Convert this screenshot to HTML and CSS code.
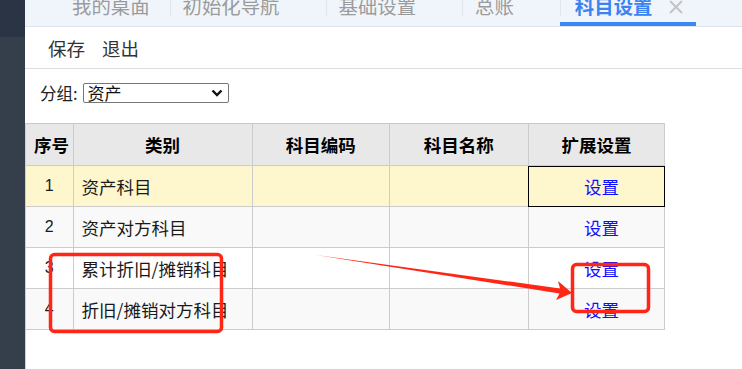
FILE: index.html
```html
<!DOCTYPE html>
<html lang="zh-CN">
<head>
    <meta charset="UTF-8">
    <meta name="viewport" content="width=device-width, initial-scale=1.0">
    <title>科目设置</title>
    <link rel="stylesheet" href="styles.css">
</head>
<body>
    <div class="sidebar">
        <div class="sidebar-top"></div>
    </div>

    <div class="main">
        <div class="tabbar">
            <div class="tab tab-first"><span class="tab-label">我的桌面</span></div>
            <div class="tab"><span class="tab-label">初始化导航</span></div>
            <div class="tab"><span class="tab-label">基础设置</span></div>
            <div class="tab"><span class="tab-label">总账</span></div>
            <div class="tab tab-active">
                <span class="tab-label">科目设置</span>
                <svg class="tab-close" width="14" height="14" viewBox="0 0 14 14">
                    <path d="M1 1 L13 13 M13 1 L1 13" stroke="#c4c4c4" stroke-width="2" fill="none"/>
                </svg>
            </div>
        </div>

        <div class="toolbar">
            <a class="tool-btn">保存</a>
            <a class="tool-btn">退出</a>
        </div>

        <div class="filter">
            <label for="group">分组:</label>
            <span class="select-box">
                <select id="group">
                    <option>资产</option>
                    <option>负债</option>
                    <option>权益</option>
                </select>
                <svg class="select-arrow" width="12" height="8" viewBox="0 0 12 8">
                    <path d="M1.5 1.5 L6 6 L10.5 1.5" stroke="#111" stroke-width="2.4" fill="none"/>
                </svg>
            </span>
        </div>

        <div class="grid-wrap">
            <table class="grid">
                <colgroup>
                    <col style="width:47px">
                    <col style="width:179px">
                    <col style="width:137px">
                    <col style="width:139px">
                    <col style="width:136px">
                </colgroup>
                <thead>
                    <tr>
                        <th>序号</th>
                        <th>类别</th>
                        <th>科目编码</th>
                        <th>科目名称</th>
                        <th>扩展设置</th>
                    </tr>
                </thead>
                <tbody>
                    <tr class="row-selected">
                        <td class="num">1</td>
                        <td>资产科目</td>
                        <td></td>
                        <td></td>
                        <td class="link cell-active"><a>设置</a></td>
                    </tr>
                    <tr class="row-alt">
                        <td class="num">2</td>
                        <td>资产对方科目</td>
                        <td></td>
                        <td></td>
                        <td class="link"><a>设置</a></td>
                    </tr>
                    <tr>
                        <td class="num">3</td>
                        <td>累计折旧/摊销科目</td>
                        <td></td>
                        <td></td>
                        <td class="link"><a>设置</a></td>
                    </tr>
                    <tr class="row-alt">
                        <td class="num">4</td>
                        <td>折旧/摊销对方科目</td>
                        <td></td>
                        <td></td>
                        <td class="link"><a>设置</a></td>
                    </tr>
                </tbody>
            </table>
        </div>
    </div>

    <!-- red annotation marks drawn over the screenshot -->
    <svg class="marks" width="742" height="369" viewBox="0 0 742 369">
        <rect x="50.5" y="254.5" width="171" height="77" rx="4" fill="none" stroke="#ff2616" stroke-width="3.5"/>
        <rect x="572.5" y="264.5" width="76" height="47" rx="4" fill="none" stroke="#ff2616" stroke-width="3.5"/>
        <polygon points="316,255 560,288.5 558,281 572,293 556,300 559.5,293.5" fill="#ff2616"/>
    </svg>
</body>
</html>
```

FILE: styles.css
```css
/* page frame */
body {
    margin: 0;
    display: flex;
    height: 100vh;
    overflow: hidden;
    font-family: "Noto Sans CJK SC", "Liberation Sans", sans-serif;
    background: #fff;
    color: #222;
}

.sidebar {
    width: 25px;
    flex-shrink: 0;
    background: #353f4c;
}

.sidebar-top {
    height: 37px;
    background: #2b3445;
}

.main {
    flex: 1;
    display: flex;
    flex-direction: column;
    min-width: 0;
}

/* tabs */
.tabbar {
    height: 26px;
    display: flex;
    align-items: flex-start;
    padding-left: 34px;
    background: #f0f5fc;
    border-bottom: 1px solid #dfe3ea;
    overflow: hidden;
}

.tab {
    position: relative;
    height: 26px;
    box-sizing: border-box;
    display: flex;
    align-items: flex-start;
    padding: 0 46px 0 13px;
    font-size: 19.4px;
    line-height: 19px;
    color: #9b9b9b;
    white-space: nowrap;
}

.tab::before {
    content: "";
    position: absolute;
    left: 0;
    top: 0;
    width: 1px;
    height: 16px;
    background: #e1e4e9;
}

.tab-first {
    padding-left: 13px;
    padding-right: 20px;
}

.tab-first::before {
    display: none;
}

.tab-label {
    margin-top: -4px;
}

.tab-active {
    padding-left: 15px;
    padding-right: 13px;
    color: #3a83f1;
    font-weight: bold;
    border-bottom: 4px solid #3b87f6;
}

.tab-close {
    margin-left: 17px;
}

/* toolbar */
.toolbar {
    height: 41px;
    display: flex;
    align-items: center;
    padding-left: 23px;
    border-bottom: 1px solid #dedede;
}

.tool-btn {
    font-size: 18.5px;
    color: #333;
    margin-right: 17px;
    cursor: pointer;
}

/* filter */
.filter {
    height: 54px;
    box-sizing: border-box;
    padding: 14px 0 0 15px;
    display: flex;
    align-items: flex-start;
}

.filter label {
    font-size: 16.5px;
    line-height: 20px;
    color: #222;
}

.select-box {
    position: relative;
    margin-left: 5px;
}

.select-box select {
    display: block;
    width: 146px;
    height: 20px;
    appearance: none;
    font-family: "Noto Sans CJK SC", sans-serif;
    font-size: 17px;
    line-height: 18px;
    padding: 0 0 0 4px;
    border: 1px solid #767676;
    border-radius: 2px;
    background: #fff;
    color: #111;
}

.select-arrow {
    position: absolute;
    right: 6px;
    top: 6px;
    pointer-events: none;
}

/* grid */
.grid-wrap {
    flex: 1;
    border-left: 1px solid #cfcfcf;
}

.grid {
    border-collapse: collapse;
    table-layout: fixed;
    width: 639px;
    font-size: 17.5px;
}

.grid th,
.grid td {
    border: 1px solid #cccccc;
    padding: 0 8px;
    white-space: nowrap;
}

.grid th {
    height: 41px;
    background: #e8e8e8;
    font-weight: bold;
    color: #000;
    text-align: center;
}

.grid td {
    height: 40px;
    color: #1a1a1a;
}

.grid tr:first-child th {
    border-top: 1px solid #c8c8c8;
}

.grid th:first-child,
.grid td:first-child {
    border-left: none;
}

.grid td.num {
    text-align: center;
    padding: 0;
    font-size: 16px;
    font-family: "Liberation Sans", "Noto Sans CJK SC", sans-serif;
}

.grid td.link {
    text-align: center;
    padding: 0 0 0 10px;
}

.grid td.link a {
    color: #1010ff;
    cursor: pointer;
}

.row-selected td {
    background: #fef6cd;
}

.row-alt td {
    background: #f9f9f9;
}

.grid td.cell-active {
    outline: 1px solid #000;
    outline-offset: -1px;
}

/* annotations */
.marks {
    position: absolute;
    left: 0;
    top: 0;
    pointer-events: none;
}
```
